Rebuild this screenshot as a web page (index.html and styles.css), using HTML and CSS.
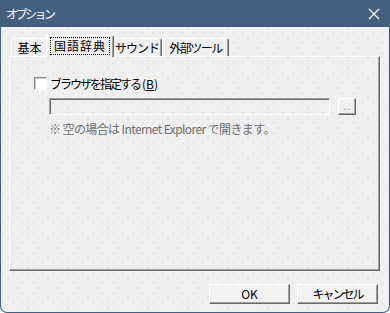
FILE: index.html
```html
<!DOCTYPE html>
<html lang="ja">
<head>
    <meta charset="UTF-8">
    <meta name="viewport" content="width=device-width, initial-scale=1.0">
    <title>オプション</title>
    <link rel="stylesheet" href="styles.css">
</head>
<body>
    <div class="window">
        <div class="titlebar">
            <span class="title">オプション</span>
            <svg class="close" width="12" height="12" viewBox="0 0 12 12">
                <path d="M1 1 L11 11 M11 1 L1 11" stroke="#fff" stroke-width="1.1" fill="none"/>
            </svg>
        </div>

        <div class="content">
            <div class="tabs">
                <div class="tab tab-basic">基本</div>
                <div class="tab tab-dict active"><span class="focus">国語辞典</span></div>
                <div class="tab tab-sound">サウンド</div>
                <div class="tab tab-tools">外部ツール</div>
            </div>

            <div class="panel">
                <label class="check-row">
                    <span class="checkbox"></span>
                    <span><span class="kana">ブラウザを指定する</span>(<u>B</u>)</span>
                </label>

                <div class="indent">
                    <div class="path-row">
                        <div class="path-input"></div>
                        <button class="browse-btn" disabled>...</button>
                    </div>
                    <p class="note">※ 空の場合は Internet Explorer で開きます。</p>
                </div>
            </div>

            <div class="footer">
                <button class="btn">OK</button>
                <button class="btn btn-kana">キャンセル</button>
            </div>
        </div>
    </div>
</body>
</html>
```

FILE: styles.css
```css
* {
    margin: 0;
    padding: 0;
    box-sizing: border-box;
}

body {
    font-family: "Noto Sans CJK JP", "Liberation Sans", sans-serif;
    font-size: 12px;
    color: #000;
    background: #fff;
}

.window {
    width: 390px;
    height: 313px;
    display: flex;
    flex-direction: column;
    border: 1px solid #41607f;
    border-top: none;
    border-radius: 0 0 7px 7px;
    overflow: hidden;
    background-color: #f0f0f0;
    background-image:
        radial-gradient(circle, #dcdcdc 0.6px, transparent 0.8px),
        radial-gradient(circle, #dcdcdc 0.6px, transparent 0.8px);
    background-size: 10px 10px, 10px 10px;
    background-position: 2px 3px, 7px 8px;
}

.titlebar {
    height: 27px;
    margin: 0 -1px;
    padding: 0 10px 0 6px;
    background: #43607f;
    color: #fff;
    display: flex;
    align-items: center;
    justify-content: space-between;
}

.title {
    font-size: 12px;
    line-height: 27px;
    letter-spacing: -2.5px;
}

.close {
    display: block;
    margin-top: 1px;
}

.content {
    flex: 1;
    padding: 8px 9px 0 8px;
    display: flex;
    flex-direction: column;
}

/* tab strip */
.tabs {
    display: flex;
    align-items: flex-end;
    height: 21px;
    padding-left: 2px;
}

.tab {
    height: 18px;
    line-height: 17px;
    text-align: center;
    border-top: 1px solid #fff;
    border-left: 1px solid #fff;
    border-right: 1px solid #696969;
    box-shadow: inset -1px 0 #a0a0a0;
    border-radius: 2px 2px 0 0;
    white-space: nowrap;
}

.tab-basic { width: 37px; }
.tab-dict  { width: 64px; }
.tab-sound { width: 50px; letter-spacing: -1px; }
.tab-tools { width: 67px; letter-spacing: -1.5px; }

.tab.active {
    position: relative;
    z-index: 1;
    width: 68px;
    height: 22px;
    margin: 0 -2px -1px -2px;
    padding: 1px 3px 0 3px;
    background-color: #f0f0f0;
}

.focus {
    display: block;
    height: 18px;
    line-height: 17px;
    letter-spacing: 1px;
    outline: 1px dotted #000;
    outline-offset: -1px;
}

/* page body */
.panel {
    height: 215px;
    border: 1px solid;
    border-color: #fff #696969 #696969 #fff;
    box-shadow: inset -1px -1px #a0a0a0;
    padding: 20px 0 0 24px;
}

.check-row {
    display: flex;
    align-items: center;
    gap: 3px;
    height: 13px;
    line-height: 13px;
}

.kana {
    letter-spacing: -2px;
    margin-right: 2px;
}

.checkbox {
    width: 13px;
    height: 13px;
    background: #fff;
    border: 1px solid;
    border-color: #8a8a8a #fff #fff #8a8a8a;
    box-shadow: inset 1px 1px #c8c8c8;
}

.indent {
    padding-left: 15px;
    margin-top: 8px;
}

.path-row {
    display: flex;
    gap: 8px;
}

.path-input {
    width: 281px;
    height: 17px;
    border: 1px solid;
    border-color: #a0a0a0 #fff #fff #a0a0a0;
    box-shadow: inset 1px 1px #696969;
}

.browse-btn {
    width: 18px;
    height: 17px;
    font-family: inherit;
    font-size: 9px;
    line-height: 12px;
    color: #a0a0a0;
    background: #f0f0f0;
    border: 1px solid;
    border-color: #fff #696969 #696969 #fff;
    box-shadow: inset -1px -1px #a0a0a0;
}

.note {
    margin-top: 6px;
    line-height: 16px;
    color: #6d6d6d;
    letter-spacing: -0.6px;
}

/* dialog buttons */
.footer {
    display: flex;
    justify-content: flex-end;
    gap: 7px;
    padding: 13px 2px 0 0;
}

.btn {
    width: 81px;
    height: 20px;
    font-family: inherit;
    font-size: 12px;
    line-height: 16px;
    color: #000;
    background: #f2f2f2;
    border: 1px solid;
    border-color: #fff #696969 #696969 #fff;
    box-shadow: inset -1px -1px #a0a0a0;
}

.btn-kana {
    letter-spacing: -2px;
}
```
